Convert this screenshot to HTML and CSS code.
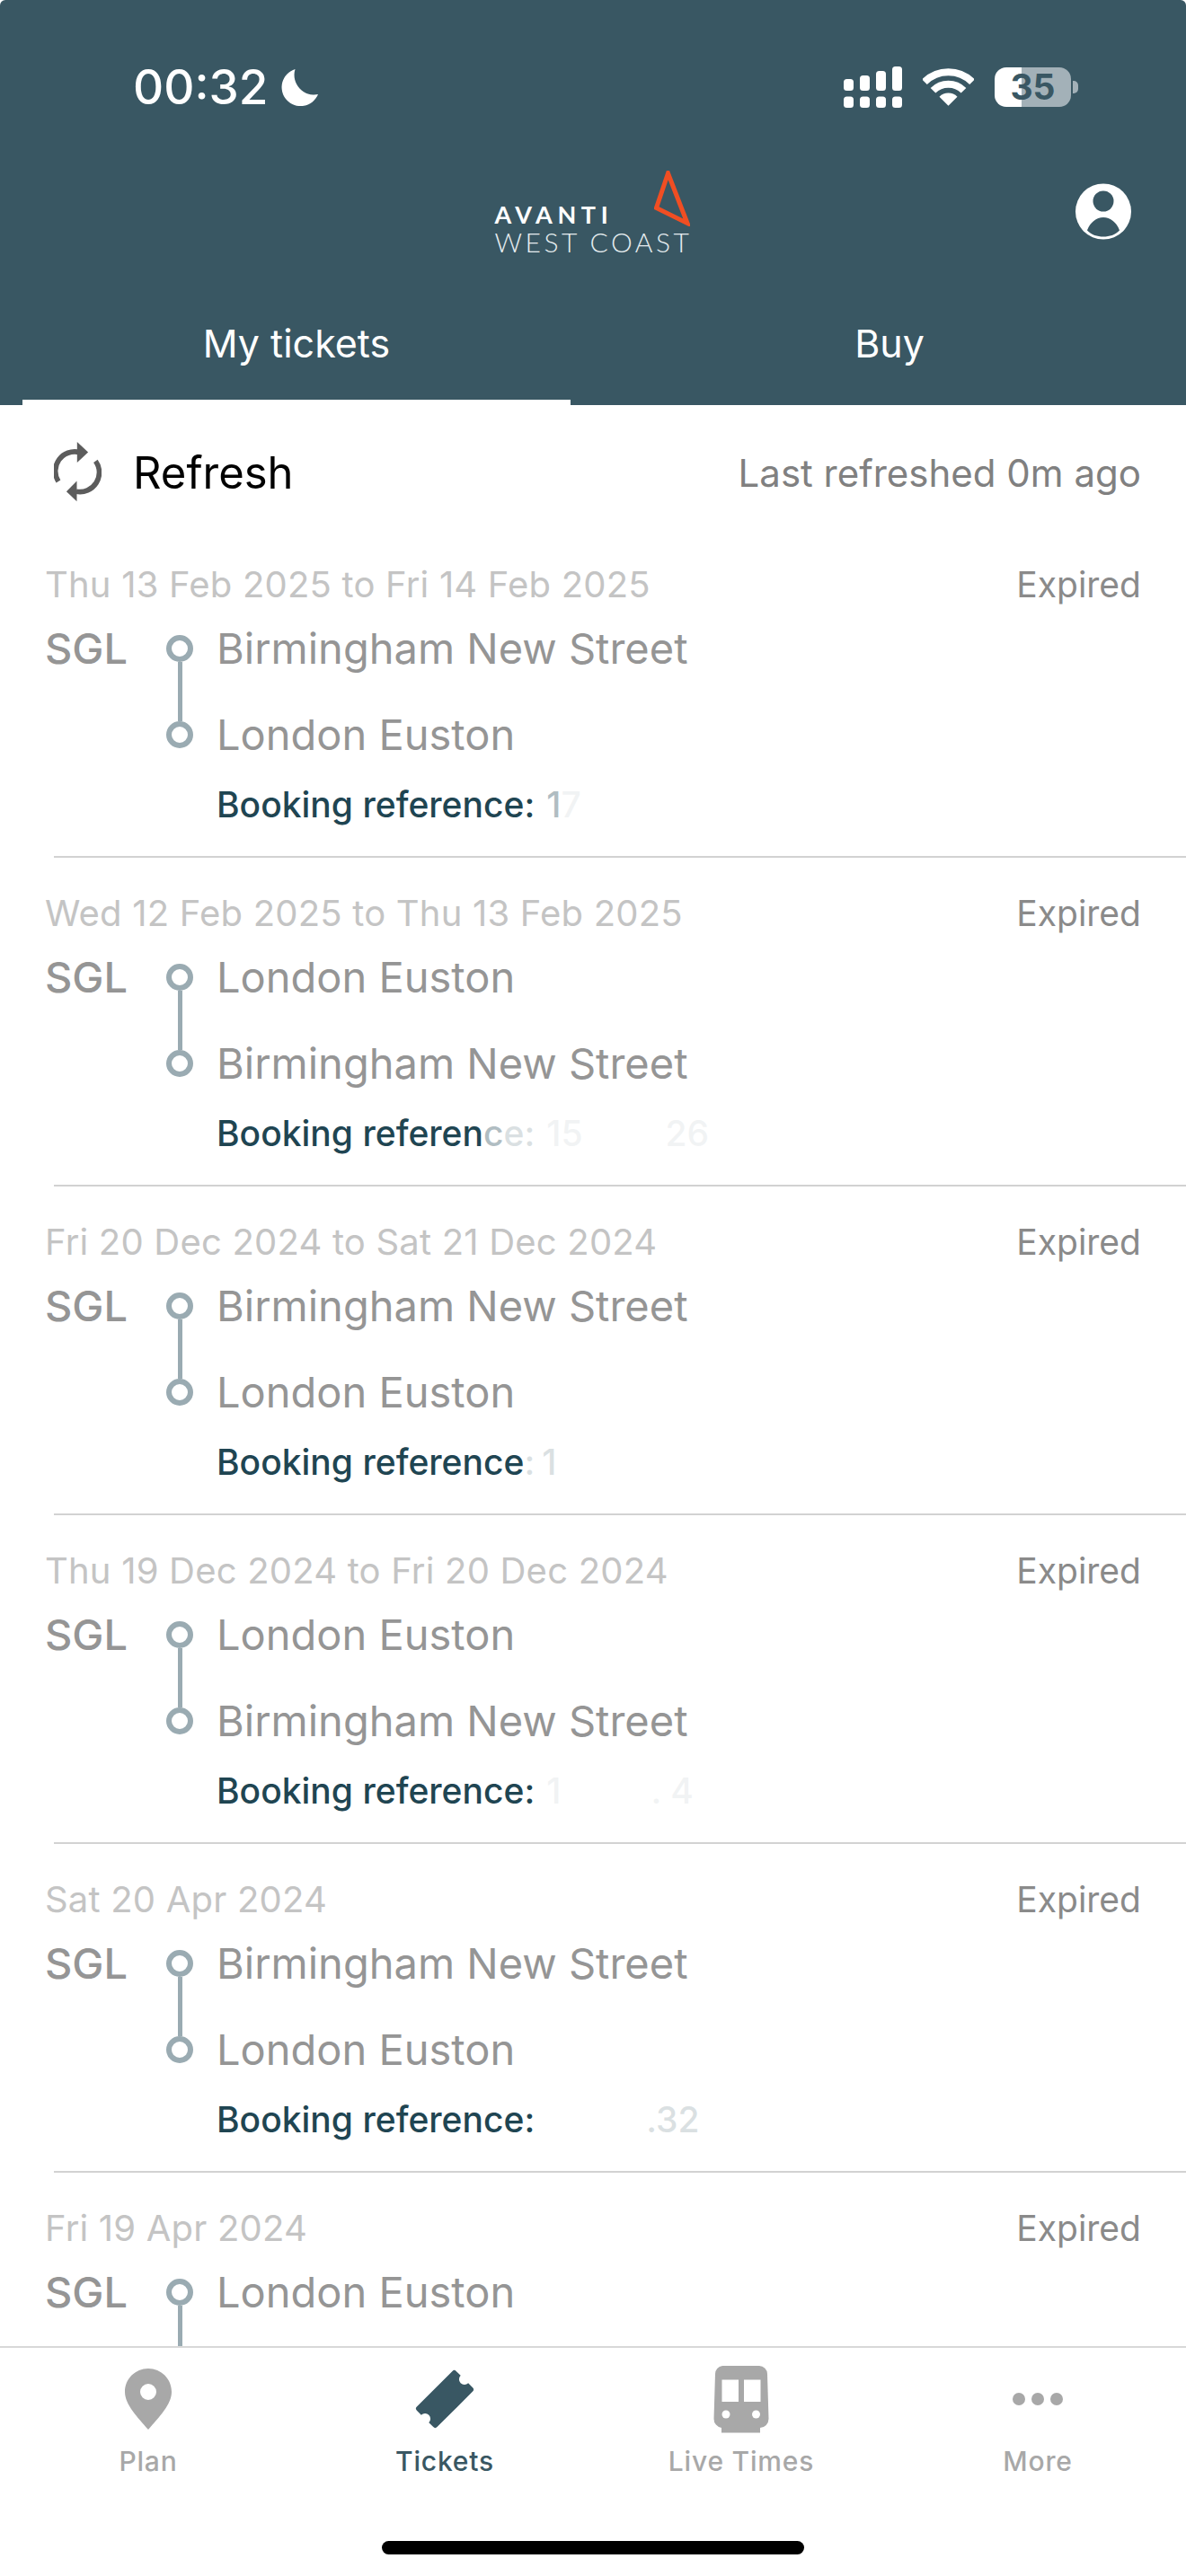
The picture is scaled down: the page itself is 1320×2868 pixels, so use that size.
FILE: index.html
```html
<!DOCTYPE html>
<html lang="en">
<head>
<meta charset="utf-8">
<title>Avanti West Coast - My tickets</title>
<link rel="stylesheet" href="styles.css">
</head>
<body>
<div class="page">
  <header class="header">
    <div class="status">
      <div class="status-left">
        <span class="time">00:32</span>
        <svg class="moon" viewBox="0 0 41 41"><path d="M15.5 0A21 21 0 1 0 41 28 A22 22 0 0 1 15.5 0Z"/></svg>
      </div>
      <div class="status-right">
        <svg class="signal" viewBox="0 0 66 46"><rect x="0" y="14" width="11" height="13" rx="3.5"/><rect x="18" y="10" width="11" height="17" rx="3.5"/><rect x="36" y="5" width="11" height="22" rx="3.5"/><rect x="54" y="0" width="11" height="27" rx="3.5"/><rect x="0" y="33.500" width="11" height="12.500" rx="3.500"/><rect x="18" y="33.500" width="11" height="12.500" rx="3.500"/><rect x="36" y="33.500" width="11" height="12.500" rx="3.500"/><rect x="54" y="33.500" width="11" height="12.500" rx="3.500"/></svg>
        <svg class="wifi" viewBox="0 0 57 42"><path class="wifi-arc" d="M2 15.200A37.500 37.500 0 0 1 55 15.200"/><path class="wifi-arc" d="M11.500 24.700A24 24 0 0 1 45.500 24.700"/><path d="M28.500 41.700L18.500 31.700A14 14 0 0 1 38.500 31.700Z"/></svg>
        <div class="battery"><span class="battery-level">35</span><span class="battery-nub"></span></div>
      </div>
    </div>
    <div class="brand-row">
      <div class="brand-side"></div>
      <div class="brand">
        <div class="brand-top">
          <span class="brand-a">AVANTI</span>
          <svg class="brand-mark" viewBox="0 0 40 62"><path d="M15.500 3L37 58.500 2.500 41.500Z"/></svg>
        </div>
        <div class="brand-b">WEST COAST</div>
      </div>
      <div class="brand-side brand-side-end">
        <svg class="avatar" viewBox="0 0 62 63"><circle cx="31" cy="31.500" r="31" fill="#fff"/><circle cx="31" cy="20" r="11.500" fill="#395763"/><path d="M13 52.500C16 44 23 38 31 38S46 44 49 52.500C44 57.500 38 59.500 31 59.500S18 57.500 13 52.500Z" fill="#395763"/></svg>
      </div>
    </div>
    <nav class="tabs">
      <div class="tab tab-active"><span class="tab-label">My tickets</span><span class="tab-bar"></span></div>
      <div class="tab"><span class="tab-label">Buy</span></div>
    </nav>
  </header>

  <main class="content">
    <div class="refresh-row">
      <div class="refresh-main">
        <svg class="refresh-icon" viewBox="90 60 160 210"><path class="refresh-arc" d="M105 198A65 65 0 0 1 175 100"/><path d="M168 65L205 100 168 135Z"/><path class="refresh-arc" d="M230 130A65 65 0 0 1 165 232"/><path d="M167 197L132 232 167 265Z"/></svg>
        <span class="refresh-label">Refresh</span>
      </div>
      <span class="refresh-time">Last refreshed 0m ago</span>
    </div>

    <article class="ticket">
      <div class="ticket-head"><span class="ticket-date">Thu 13 Feb 2025 to Fri 14 Feb 2025</span><span class="ticket-state">Expired</span></div>
      <div class="ticket-body">
        <span class="ticket-type">SGL</span>
        <div class="rail"><span class="ring"></span><span class="rail-line"></span><span class="ring"></span></div>
        <div class="stops"><div class="stop">Birmingham New Street</div><div class="stop">London Euston</div></div>
      </div>
      <div class="ref"><span>Booking reference:</span><span class="veil-soft gap-s">1</span><span class="veil-ghost">7</span></div>
      <div class="rule"></div>
    </article>

    <article class="ticket">
      <div class="ticket-head"><span class="ticket-date">Wed 12 Feb 2025 to Thu 13 Feb 2025</span><span class="ticket-state">Expired</span></div>
      <div class="ticket-body">
        <span class="ticket-type">SGL</span>
        <div class="rail"><span class="ring"></span><span class="rail-line"></span><span class="ring"></span></div>
        <div class="stops"><div class="stop">London Euston</div><div class="stop">Birmingham New Street</div></div>
      </div>
      <div class="ref"><span>Booking referen</span><span class="veil-soft">c</span><span class="veil-faint">e:</span><span class="veil-ghost gap-s">15</span><span class="veil-ghost gap-l">26</span></div>
      <div class="rule"></div>
    </article>

    <article class="ticket">
      <div class="ticket-head"><span class="ticket-date">Fri 20 Dec 2024 to Sat 21 Dec 2024</span><span class="ticket-state">Expired</span></div>
      <div class="ticket-body">
        <span class="ticket-type">SGL</span>
        <div class="rail"><span class="ring"></span><span class="rail-line"></span><span class="ring"></span></div>
        <div class="stops"><div class="stop">Birmingham New Street</div><div class="stop">London Euston</div></div>
      </div>
      <div class="ref"><span>Booking reference</span><span class="veil-faint">:</span><span class="veil-faint gap-t">1</span></div>
      <div class="rule"></div>
    </article>

    <article class="ticket">
      <div class="ticket-head"><span class="ticket-date">Thu 19 Dec 2024 to Fri 20 Dec 2024</span><span class="ticket-state">Expired</span></div>
      <div class="ticket-body">
        <span class="ticket-type">SGL</span>
        <div class="rail"><span class="ring"></span><span class="rail-line"></span><span class="ring"></span></div>
        <div class="stops"><div class="stop">London Euston</div><div class="stop">Birmingham New Street</div></div>
      </div>
      <div class="ref"><span>Booking reference:</span><span class="veil-ghost gap-s">1</span><span class="veil-ghost gap-m">. 4</span></div>
      <div class="rule"></div>
    </article>

    <article class="ticket">
      <div class="ticket-head"><span class="ticket-date">Sat 20 Apr 2024</span><span class="ticket-state">Expired</span></div>
      <div class="ticket-body">
        <span class="ticket-type">SGL</span>
        <div class="rail"><span class="ring"></span><span class="rail-line"></span><span class="ring"></span></div>
        <div class="stops"><div class="stop">Birmingham New Street</div><div class="stop">London Euston</div></div>
      </div>
      <div class="ref"><span>Booking reference:</span><span class="veil-faint gap-x">.32</span></div>
      <div class="rule"></div>
    </article>

    <article class="ticket">
      <div class="ticket-head"><span class="ticket-date">Fri 19 Apr 2024</span><span class="ticket-state">Expired</span></div>
      <div class="ticket-body">
        <span class="ticket-type">SGL</span>
        <div class="rail"><span class="ring"></span><span class="rail-line"></span></div>
        <div class="stops"><div class="stop">London Euston</div></div>
      </div>
    </article>
  </main>

  <footer class="bottom">
    <div class="bottom-nav">
      <div class="nav-item">
        <div class="nav-icon"><svg class="icon-pin" viewBox="0 0 52 68"><path fill-rule="evenodd" d="M26 0C11.600 0 0 11.600 0 26 0 40 14 54 26 68 38 54 52 40 52 26 52 11.600 40.400 0 26 0ZM26 17A9 9 0 1 1 26 35 9 9 0 1 1 26 17Z"/></svg></div>
        <span class="nav-label">Plan</span>
      </div>
      <div class="nav-item nav-active">
        <div class="nav-icon"><svg class="icon-ticket" viewBox="-34 -34 68 68"><path transform="rotate(-45)" d="M-28-16H28A3 3 0 0 1 31-13V-6A6 6 0 0 0 31 6V13A3 3 0 0 1 28 16H-28A3 3 0 0 1-31 13V6A6 6 0 0 0-31-6V-13A3 3 0 0 1-28-16Z"/></svg></div>
        <span class="nav-label">Tickets</span>
      </div>
      <div class="nav-item">
        <div class="nav-icon"><svg class="icon-train" viewBox="0 0 62 75"><path d="M10 0H51A9 9 0 0 1 60 9L61.500 59A10 10 0 0 1 52 69V74.500H9V69A10 10 0 0 1 .5 59L2 9A9 9 0 0 1 10 0Z"/><rect class="cut" x="9.500" y="15.500" width="18.500" height="24.500"/><rect class="cut" x="34" y="15.500" width="18.500" height="24.500"/><circle class="cut" cx="14" cy="54" r="4.500"/><circle class="cut" cx="47.500" cy="54" r="4.500"/></svg></div>
        <span class="nav-label">Live Times</span>
      </div>
      <div class="nav-item">
        <div class="nav-icon"><svg class="icon-more" viewBox="0 0 56 14"><circle cx="7" cy="7" r="7"/><circle cx="28" cy="7" r="7"/><circle cx="49" cy="7" r="7"/></svg></div>
        <span class="nav-label">More</span>
      </div>
    </div>
    <div class="home-bar"></div>
  </footer>
</div>
</body>
</html>
```

FILE: styles.css
```css
* { box-sizing: border-box; }
html, body { margin: 0; padding: 0; background: #fff; }
body { font-family: "Inter", "Liberation Sans", sans-serif; }

.page {
  width: 1320px;
  height: 2868px;
  display: flex;
  flex-direction: column;
  overflow: hidden;
  background: #fff;
}

/* Header */
.header {
  height: 451px;
  flex: none;
  background: #395763;
  color: #fff;
  padding-top: 70px;
  border-radius: 6px 6px 0 0;
}
.status {
  height: 54px;
  display: flex;
  justify-content: space-between;
  align-items: center;
  padding: 0 128px 0 148px;
}
.status-left { display: flex; align-items: center; gap: 15px; }
.time { font-size: 53px; font-weight: 500; line-height: 54px; }
.moon { width: 41px; height: 41px; fill: #fff; }
.status-right { display: flex; align-items: center; }
.signal { width: 66px; height: 46px; fill: #fff; }
.wifi { width: 57px; height: 42px; fill: #fff; margin-left: 22px; }
.wifi-arc { fill: none; stroke: #fff; stroke-width: 8; }
.battery {
  position: relative;
  width: 85px;
  height: 44px;
  margin-left: 23px;
  border-radius: 13px;
  background: linear-gradient(90deg, #fff 30px, #a3b1b8 30px);
  display: flex;
  align-items: center;
  justify-content: center;
}
.battery-level { font-size: 39px; font-weight: 700; line-height: 44px; color: #395763; }
.battery-nub {
  position: absolute;
  left: 87px;
  top: 15px;
  width: 6px;
  height: 14px;
  border-radius: 0 5px 5px 0;
  background: #a3b1b8;
}

.brand-row {
  margin-top: 64px;
  display: grid;
  grid-template-columns: 1fr auto 1fr;
  height: 93px;
  align-items: start;
}
.brand { width: 219px; display: flex; flex-direction: column; }
.brand-top { display: flex; justify-content: space-between; align-items: flex-end; height: 61px; }
.brand-a {
  font-family: "Lato", sans-serif;
  font-size: 27px;
  font-weight: 700;
  letter-spacing: 5.600px;
  line-height: 20px;
}
.brand-mark { width: 40px; height: 62px; fill: none; stroke: #f04e23; stroke-width: 5; margin: 0 2px -3px 0; }
.brand-b {
  margin-top: 10px;
  font-family: "Lato", sans-serif;
  font-size: 30px;
  font-weight: 300;
  letter-spacing: 3.500px;
  line-height: 21px;
  white-space: nowrap;
  color: #e6edf0;
}
.brand-side-end { display: flex; justify-content: flex-end; padding: 16px 61px 0 0; }
.avatar { width: 62px; height: 63px; }

.tabs {
  margin-top: 75px;
  display: grid;
  grid-template-columns: 660px 660px;
}
.tab { display: flex; flex-direction: column; align-items: center; height: 95px; }
.tab-label { font-size: 43px; line-height: 52px; font-weight: 400; color: #fff; }
.tab-bar { align-self: stretch; margin: 37px 25px 0; height: 6px; background: #fff; }

/* Content */
.content { flex: 1; min-height: 0; overflow: hidden; }

.refresh-row {
  height: 138px;
  padding: 14px 50px 0 60px;
  display: flex;
  align-items: center;
  justify-content: space-between;
}
.refresh-main { display: flex; align-items: center; gap: 35px; }
.refresh-icon { width: 53px; height: 70px; fill: #5c5c5c; margin-top: -4px; }
.refresh-arc { fill: none; stroke: #5c5c5c; stroke-width: 17; }
.refresh-label { font-size: 49px; line-height: 60px; color: #000; }
.refresh-time { font-size: 42px; line-height: 56px; color: #808080; }

.ticket { height: 366px; padding: 40px 0 0 50px; }
.ticket-head {
  display: flex;
  justify-content: space-between;
  height: 44px;
  margin-bottom: 1px;
  padding-right: 50px;
  align-items: center;
}
.ticket-date { font-size: 40px; letter-spacing: .2px; line-height: 44px; color: #c4c4c4; }
.ticket-state { font-size: 39px; line-height: 44px; color: #8a8a8a; }
.ticket-body { display: flex; height: 192px; }
.ticket-type { width: 135px; font-size: 47px; font-weight: 500; line-height: 96px; color: #959595; }
.rail {
  width: 30px;
  display: flex;
  flex-direction: column;
  align-items: center;
  padding-top: 33px;
}
.ring { width: 30px; height: 30px; border: 6px solid #9aabb2; border-radius: 50%; flex: none; }
.rail-line { width: 5px; height: 66px; background: #9aabb2; flex: none; }
.stops { margin-left: 26px; }
.stop { height: 96px; font-size: 47px; line-height: 96px; color: #959595; white-space: nowrap; }
.ref {
  margin-left: 191px;
  height: 58px;
  display: flex;
  align-items: center;
  font-size: 39px;
  font-weight: 500;
  color: #1f4552;
  white-space: nowrap;
}
.veil-soft { opacity: .35; }
.veil-faint { opacity: .16; }
.veil-ghost { opacity: .06; }
.gap-s { margin-left: 13px; }
.gap-t { margin-left: 8px; }
.gap-m { margin-left: 100px; }
.gap-l { margin-left: 92px; }
.gap-x { margin-left: 124px; }
.rule { height: 2px; margin: 29px 0 0 10px; background: #d2d2d2; }

/* Bottom navigation */
.bottom {
  height: 256px;
  flex: none;
  background: #fff;
  border-top: 2px solid #d8d8d8;
  display: flex;
  flex-direction: column;
}
.bottom-nav { display: grid; grid-template-columns: repeat(4, 330px); padding-top: 18px; }
.nav-item { display: flex; flex-direction: column; align-items: center; color: #a8a8a8; }
.nav-active { color: #395763; }
.nav-icon { height: 78px; display: flex; align-items: center; justify-content: center; }
.nav-icon svg { fill: currentColor; }
.icon-pin { width: 52px; height: 68px; }
.icon-ticket { width: 68px; height: 68px; }
.icon-train { width: 62px; height: 75px; }
.icon-more { width: 56px; height: 14px; }
.cut { fill: #fff; }
.nav-label { margin-top: 12px; font-size: 30px; line-height: 36px; font-weight: 500; letter-spacing: .8px; }
.home-bar {
  margin: auto auto 24px;
  width: 470px;
  height: 15px;
  border-radius: 8px;
  background: #000;
}
```
